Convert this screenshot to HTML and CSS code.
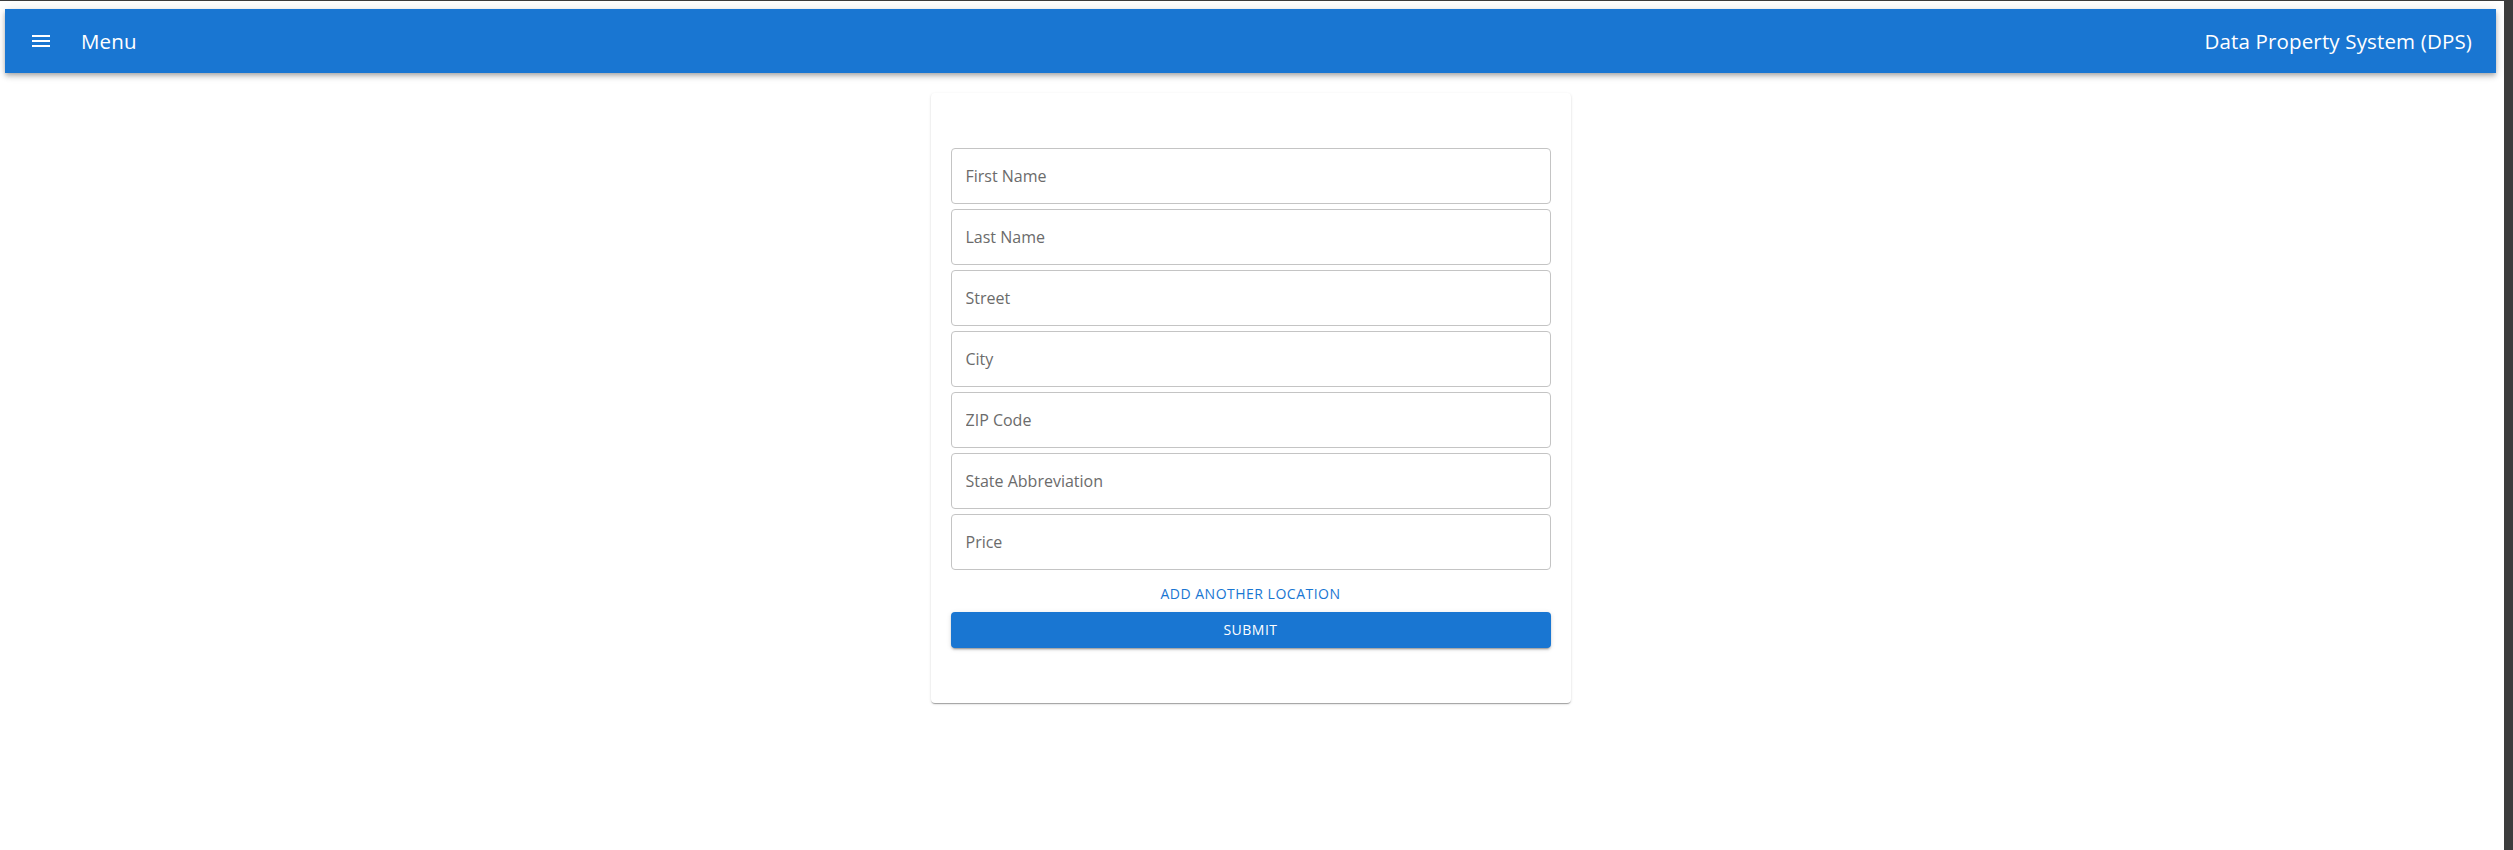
FILE: index.html
```html
<!DOCTYPE html>
<html lang="en">
<head>
<meta charset="utf-8">
<title>Data Property System (DPS)</title>
<link rel="stylesheet" href="styles.css">
</head>
<body>
<div class="frame">
  <div class="page">
    <header class="appbar">
      <div class="appbar-left">
        <button class="icon-btn" type="button" aria-label="menu">
          <svg viewBox="0 0 24 24" width="24" height="24"><path fill="#fff" d="M3 18h18v-2H3v2zm0-5h18v-2H3v2zm0-7v2h18V6H3z"/></svg>
        </button>
        <span class="appbar-title">Menu</span>
      </div>
      <span class="appbar-title">Data Property System (DPS)</span>
    </header>
    <main class="content">
      <form class="card">
        <input class="field" type="text" placeholder="First Name">
        <input class="field" type="text" placeholder="Last Name">
        <input class="field" type="text" placeholder="Street">
        <input class="field" type="text" placeholder="City">
        <input class="field" type="text" placeholder="ZIP Code">
        <input class="field" type="text" placeholder="State Abbreviation">
        <input class="field" type="text" placeholder="Price">
        <button class="text-btn" type="button">Add another location</button>
        <button class="submit-btn" type="button">Submit</button>
      </form>
    </main>
  </div>
  <div class="strip"></div>
</div>
</body>
</html>
```

FILE: styles.css
```css
* { box-sizing: border-box; }
html, body { margin: 0; padding: 0; }
body {
  width: 2513px;
  height: 850px;
  overflow: hidden;
  background: #fff;
  font-family: "Open Sans", "Noto Sans", sans-serif;
}
.frame {
  display: flex;
  height: 850px;
  border-top: 1px solid #3c3c3c;
}
.page {
  flex: 1;
  padding: 8px 8px 0 5px;
  background: #fff;
}
.strip {
  width: 9px;
  background: #3c3c3c;
}
.appbar {
  height: 64px;
  background: #1976d2;
  color: #fff;
  display: flex;
  align-items: center;
  justify-content: space-between;
  padding: 0 24px 0 12px;
  box-shadow: 0 2px 4px -1px rgba(0,0,0,0.2), 0 4px 5px 0 rgba(0,0,0,0.14), 0 1px 10px 0 rgba(0,0,0,0.12);
}
.appbar-left {
  display: flex;
  align-items: center;
}
.icon-btn {
  width: 48px;
  height: 48px;
  padding: 12px;
  margin-right: 16px;
  border: 0;
  background: transparent;
  display: flex;
}
.appbar-title {
  font-size: 20.5px;
  font-weight: 400;
  line-height: 1.6;
  letter-spacing: 0.15px;
}
.content {
  display: flex;
  justify-content: center;
  padding-top: 20px;
}
.card {
  width: 640px;
  padding: 55px 20px;
  background: #fff;
  border-radius: 4px;
  display: flex;
  flex-direction: column;
  gap: 5px;
  box-shadow: 0 2px 1px -1px rgba(0,0,0,0.2), 0 1px 1px 0 rgba(0,0,0,0.14), 0 1px 3px 0 rgba(0,0,0,0.12);
}
.field {
  height: 56px;
  width: 100%;
  border: 1px solid #c4c4c4;
  border-radius: 4px;
  padding: 0 14px;
  font-family: inherit;
  font-size: 16px;
  color: rgba(0,0,0,0.87);
  background: #fff;
  outline: none;
}
.field::placeholder {
  color: #6b6b6b;
  opacity: 1;
}
.text-btn {
  align-self: center;
  height: 36px;
  margin-top: 0;
  padding: 6px 8px;
  border: 0;
  background: transparent;
  color: #1976d2;
  font-family: inherit;
  font-size: 14px;
  font-weight: 500;
  letter-spacing: 0.5px;
  text-transform: uppercase;
}
.submit-btn {
  height: 36px;
  margin-top: -4px;
  padding: 0 0 2px;
  width: 100%;
  border: 0;
  border-radius: 4px;
  background: #1976d2;
  color: #fff;
  font-family: inherit;
  font-size: 14px;
  font-weight: 500;
  letter-spacing: 0.5px;
  text-transform: uppercase;
  box-shadow: 0 3px 1px -2px rgba(0,0,0,0.2), 0 2px 2px 0 rgba(0,0,0,0.14), 0 1px 5px 0 rgba(0,0,0,0.12);
}
```
